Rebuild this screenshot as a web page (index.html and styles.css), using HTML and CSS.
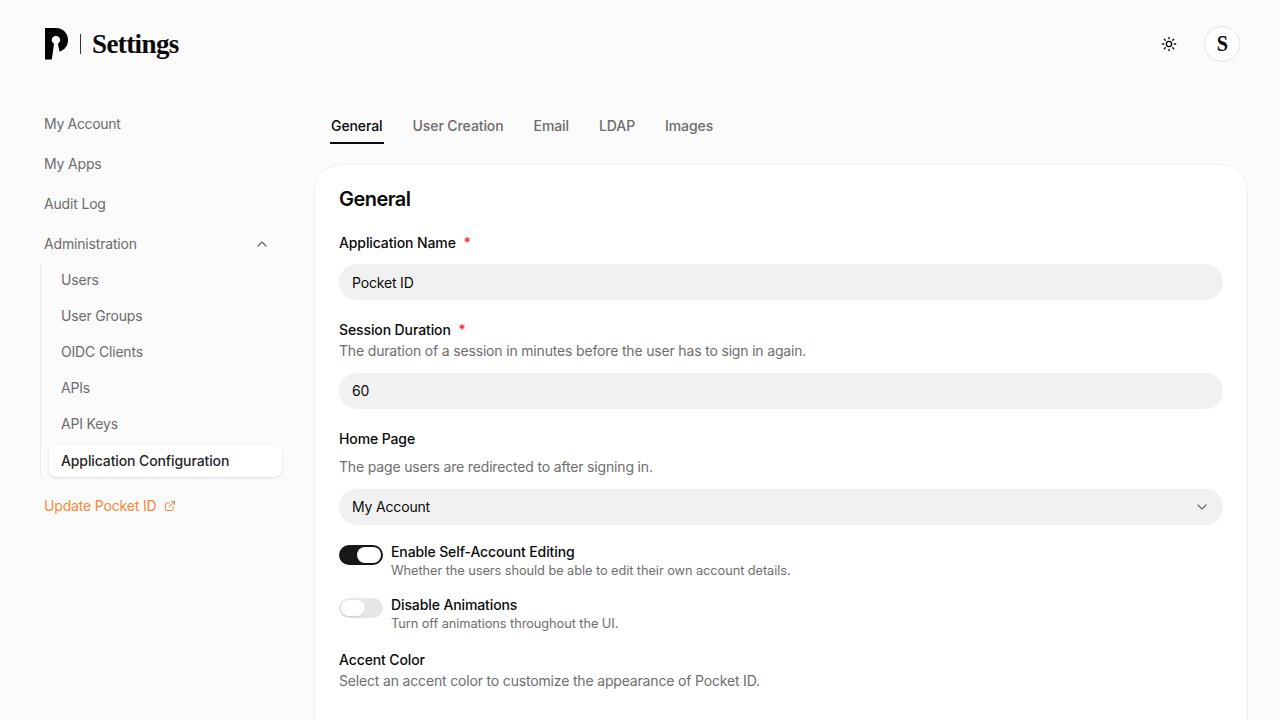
FILE: index.html
```html
<!DOCTYPE html>
<html lang="en">
<head>
    <meta charset="UTF-8">
    <title>Settings</title>
    <link rel="stylesheet" href="styles.css">
</head>
<body>
    <header class="header">
        <div class="brand">
            <svg class="logo" width="24" height="32" viewBox="0 0 24 32">
                <path d="M1 0H12C19 0 24 5 24 12C24 18.2 20.3 22.3 15.4 23.5L13.9 15.7A4.2 4.2 0 1 0 10 15.7L7.8 31.5H1Z" fill="#000"/>
            </svg>
            <span class="divider"></span>
            <h1>Settings</h1>
        </div>
        <div class="header-actions">
            <svg class="icon" width="16" height="16" viewBox="0 0 24 24">
                <circle cx="12" cy="12" r="4"/>
                <path d="M12 2v2M12 20v2M4.93 4.93l1.41 1.41M17.66 17.66l1.41 1.41M2 12h2M20 12h2M6.34 17.66l-1.41 1.41M19.07 4.93l-1.41 1.41"/>
            </svg>
            <div class="avatar"><span>S</span></div>
        </div>
    </header>

    <div class="layout">
        <nav class="sidebar">
            <a class="nav-item my-account">My Account</a>
            <a class="nav-item">My Apps</a>
            <a class="nav-item">Audit Log</a>
            <a class="nav-item">Administration
                <svg class="icon" width="16" height="16" viewBox="0 0 24 24"><path d="m18 15-6-6-6 6"/></svg>
            </a>
            <div class="sub-nav">
                <a class="sub-item">Users</a>
                <a class="sub-item">User Groups</a>
                <a class="sub-item">OIDC Clients</a>
                <a class="sub-item">APIs</a>
                <a class="sub-item">API Keys</a>
                <a class="sub-item active">Application Configuration</a>
            </div>
            <a class="update-link">Update Pocket ID
                <svg class="icon" width="12" height="12" viewBox="0 0 24 24"><path d="M15 3h6v6M10 14 21 3M18 13v6a2 2 0 0 1-2 2H5a2 2 0 0 1-2-2V8a2 2 0 0 1 2-2h6"/></svg>
            </a>
        </nav>

        <main class="content">
            <div class="tabs">
                <a class="tab active">General</a>
                <a class="tab">User Creation</a>
                <a class="tab">Email</a>
                <a class="tab">LDAP</a>
                <a class="tab">Images</a>
            </div>

            <section class="card">
                <h2>General</h2>

                <div class="field">
                    <label for="appName">Application Name <span class="required">*</span></label>
                    <input type="text" id="appName" value="Pocket ID">
                </div>

                <div class="field session">
                    <label for="sessionDuration">Session Duration <span class="required">*</span></label>
                    <p class="description">The duration of a session in minutes before the user has to sign in again.</p>
                    <input type="text" id="sessionDuration" value="60">
                </div>

                <div class="field home-page">
                    <label>Home Page</label>
                    <p class="description">The page users are redirected to after signing in.</p>
                    <div class="select my-account">My Account
                        <svg class="icon" width="16" height="16" viewBox="0 0 24 24"><path d="m6 9 6 6 6-6"/></svg>
                    </div>
                </div>

                <div class="switch-field">
                    <span class="switch on"><span class="thumb"></span></span>
                    <div>
                        <label>Enable Self-Account Editing</label>
                        <p class="hint">Whether the users should be able to edit their own account details.</p>
                    </div>
                </div>

                <div class="switch-field">
                    <span class="switch"><span class="thumb"></span></span>
                    <div>
                        <label>Disable Animations</label>
                        <p class="hint">Turn off animations throughout the UI.</p>
                    </div>
                </div>

                <div class="field accent">
                    <label>Accent Color</label>
                    <p class="description">Select an accent color to customize the appearance of Pocket ID.</p>
                </div>
            </section>
        </main>
    </div>
</body>
</html>
```
FILE: styles.css
```css
* {
    box-sizing: border-box;
}

body {
    display: flex;
    flex-direction: column;
    margin: 0;
    height: 100vh;
    overflow: hidden;
    background: #fbfbfb;
    color: #0a0a0a;
    font-family: Inter, sans-serif;
    font-size: 14px;
    line-height: 20px;
    letter-spacing: -0.17px;
}

h1, h2, p {
    margin: 0;
}

.icon {
    fill: none;
    stroke: currentColor;
    stroke-width: 2;
    stroke-linecap: round;
    stroke-linejoin: round;
    flex-shrink: 0;
}

.header {
    display: flex;
    align-items: center;
    justify-content: space-between;
    height: 88px;
    padding: 0 40px 0 44px;
}

.brand {
    display: flex;
    align-items: center;
}

.divider {
    width: 1px;
    height: 20px;
    margin: 0 11px 0 12px;
    background: #333;
}

.brand h1 {
    font-family: "Liberation Serif", serif;
    font-size: 27px;
    line-height: 32px;
    font-weight: bold;
    letter-spacing: -0.6px;
}

.header-actions {
    display: flex;
    align-items: center;
    gap: 27px;
}

.avatar {
    display: flex;
    align-items: center;
    justify-content: center;
    width: 36px;
    height: 36px;
    border: 1px solid #e5e5e5;
    border-radius: 50%;
    background: #fff;
    font-family: "Liberation Serif", serif;
    font-size: 23px;
    font-weight: bold;
    letter-spacing: 0;
}

.avatar span {
    transform: scaleX(0.88);
}

.layout {
    display: flex;
    flex: 1;
    gap: 33px;
    padding: 16px 33px 0 40px;
}

.sidebar {
    display: flex;
    flex-direction: column;
    width: 242px;
    flex-shrink: 0;
    color: #6c6c6c;
}

.nav-item {
    display: flex;
    align-items: center;
    justify-content: space-between;
    height: 40px;
    padding: 0 12px 0 4px;
}

.my-account {
    letter-spacing: -0.32px;
}

.sub-nav {
    display: flex;
    flex-direction: column;
    gap: 4px;
    height: 212px;
    border-left: 1px solid #ebebeb;
    padding-left: 8px;
}

.sub-item {
    flex-shrink: 0;
    height: 32px;
    padding: 6px 12px;
    border-radius: 8px;
}

.sub-item.active {
    margin-top: 1px;
    background: #fff;
    color: #262626;
    font-weight: 500;
    letter-spacing: -0.11px;
    box-shadow: 0 1px 3px rgba(0, 0, 0, 0.12);
}

.update-link {
    display: flex;
    align-items: center;
    gap: 8px;
    margin-top: 20px;
    padding-left: 4px;
    color: #ff8534;
}

.content {
    display: flex;
    flex-direction: column;
    flex: 1;
}

.tabs {
    display: flex;
    gap: 28px;
    height: 40px;
    padding: 12px 15px 0;
}

.tab {
    padding: 0 1px;
    color: #6c6c6c;
    font-weight: 500;
    letter-spacing: -0.09px;
}

.tab.active {
    color: #0a0a0a;
    border-bottom: 2px solid #0a0a0a;
}

.card {
    display: flex;
    flex-direction: column;
    flex: 1;
    margin-top: 21px;
    padding: 20px 24px;
    border-radius: 26px 26px 0 0;
    background: #fff;
    box-shadow: 0 0 0 1px #f1f1f1, 0 1px 3px rgba(0, 0, 0, 0.06);
}

.card h2 {
    font-size: 20px;
    line-height: 28px;
    font-weight: 600;
    letter-spacing: -0.55px;
}

label {
    display: block;
    font-weight: 500;
    letter-spacing: -0.11px;
}

.field {
    margin-top: 20px;
}

.required {
    margin-left: 4px;
    color: #fb2c36;
    font-weight: 600;
}

.description {
    margin-top: 1px;
    color: #6e6e6e;
}

.field input,
.select {
    display: flex;
    align-items: center;
    justify-content: space-between;
    width: 100%;
    height: 36px;
    margin-top: 11px;
    padding: 1px 13px;
    border: none;
    border-radius: 18px;
    background: #f1f1f1;
    color: #0a0a0a;
    font: inherit;
    letter-spacing: inherit;
}

.session input {
    margin-top: 12px;
    padding-bottom: 2px;
}

.select .icon {
    color: #737373;
}

.home-page .description {
    margin-top: 8px;
}

.home-page .select {
    margin-top: 12px;
}

.switch-field {
    display: flex;
    gap: 8px;
    margin-top: 17px;
}

.switch {
    display: flex;
    align-items: center;
    width: 44px;
    height: 20px;
    margin-top: 3px;
    padding: 2px;
    border-radius: 10px;
    background: #e7e7e7;
}

.switch.on {
    justify-content: flex-end;
    background: #171717;
}

.thumb {
    width: 24px;
    height: 16px;
    border-radius: 8px;
    background: #fff;
    box-shadow: 0 1px 2px rgba(0, 0, 0, 0.12);
}

.hint {
    color: #6e6e6e;
    font-size: 12.8px;
    line-height: 16px;
    letter-spacing: -0.07px;
    padding-top: 0.5px;
    margin-bottom: -0.5px;
}

.accent {
    margin-top: 19px;
}
```
